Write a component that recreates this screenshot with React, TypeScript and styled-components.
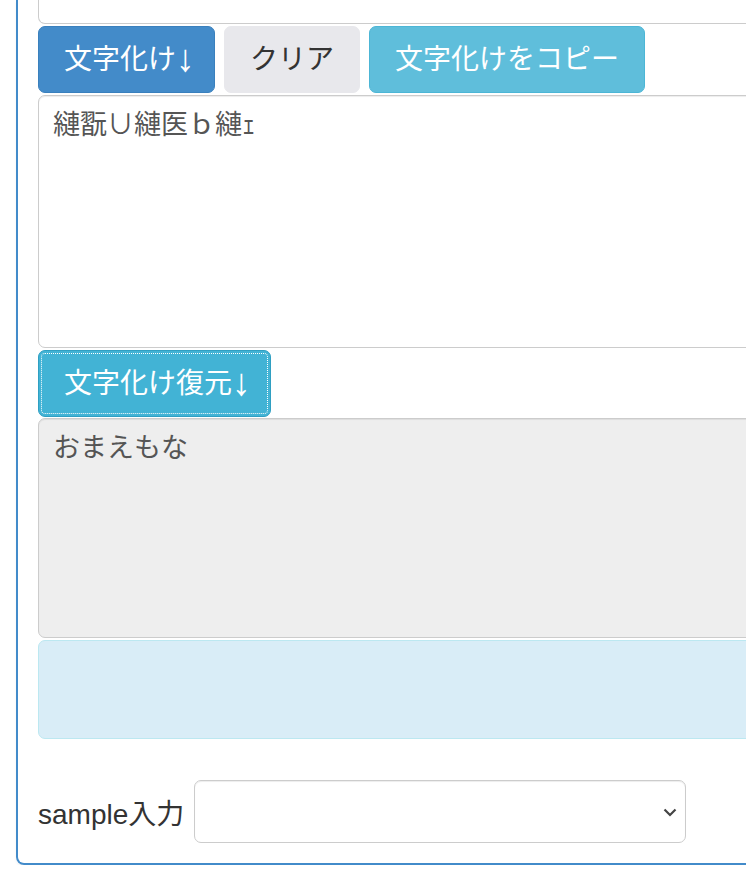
import React from "react";
import styled, { createGlobalStyle, css } from "styled-components";

const Global = createGlobalStyle`
  html, body {
    margin: 0;
    padding: 0;
    background: #fff;
    overflow: hidden;
  }
  body {
    font-family: "Liberation Sans", "Noto Sans CJK JP", sans-serif;
    color: #333;
  }
`;

const Page = styled.div`
  padding: 0 0 0 16px;
  width: 820px;
`;

const Panel = styled.div`
  border: 2px solid #428bca;
  border-top: none;
  border-radius: 0 0 8px 8px;
  padding: 0 20px 20px 20px;
  display: flex;
  flex-direction: column;
  box-shadow: 0 2px 3px rgba(0, 0, 0, 0.05);
`;

const Area = styled.textarea<{ $h: number; $readonly?: boolean; $cut?: boolean }>`
  display: block;
  box-sizing: border-box;
  width: 100%;
  height: ${(p) => p.$h}px;
  margin: 0;
  padding: 9px 14px;
  border: 1px solid #ccc;
  border-radius: 7px;
  background: ${(p) => (p.$readonly ? "#eee" : "#fff")};
  color: #555;
  font-family: "Liberation Sans", "Noto Sans CJK JP", sans-serif;
  font-size: 27px;
  line-height: 40px;
  resize: none;
  outline: none;
  box-shadow: inset 0 1px 1px rgba(0, 0, 0, 0.075);
  ${(p) =>
    p.$cut &&
    css`
      border-top: none;
      border-radius: 0 0 7px 7px;
      box-shadow: none;
    `}
`;

const ButtonRow = styled.div`
  display: flex;
  gap: 9px;
  margin: 2px 0;
`;

type Variant = "primary" | "default" | "info" | "infoActive";

const palette: Record<Variant, { bg: string; border: string; color: string }> = {
  primary: { bg: "#438bc9", border: "#3a80bd", color: "#fff" },
  default: { bg: "#e8e8ec", border: "#e8e8ec", color: "#333" },
  info: { bg: "#5fbedb", border: "#4cb6d6", color: "#fff" },
  infoActive: { bg: "#42b3d5", border: "#2f9fc2", color: "#fff" },
};

const Btn = styled.button<{ $v: Variant; $focus?: boolean }>`
  box-sizing: border-box;
  height: 67px;
  padding: 0 25px;
  border: 1px solid ${(p) => palette[p.$v].border};
  border-radius: 7px;
  background: ${(p) => palette[p.$v].bg};
  color: ${(p) => palette[p.$v].color};
  font-family: "Liberation Sans", "Noto Sans CJK JP", sans-serif;
  font-size: 28px;
  line-height: 36px;
  white-space: nowrap;
  cursor: pointer;
  ${(p) =>
    p.$focus &&
    css`
      outline: 1.5px dotted #fff;
      outline-offset: -4px;
    `}
`;

const Arrow = styled.span`
  font-family: "Liberation Sans", sans-serif;
  font-size: 1.35em;
  line-height: 1px;
  vertical-align: -2px;
  margin-right: -6px;
`;

const SingleRow = styled.div`
  display: flex;
  margin: 2px 0 1px;
`;

const Alert = styled.div`
  box-sizing: border-box;
  height: 99px;
  margin-top: 2px;
  background: #d9edf7;
  border: 1px solid #bce8f1;
  border-radius: 7px;
`;

const FormRow = styled.div`
  display: flex;
  align-items: center;
  gap: 10px;
  margin-top: 41px;
`;

const Label = styled.label`
  font-size: 28px;
  color: #333;
  white-space: nowrap;
`;

const SelectWrap = styled.div`
  position: relative;
  width: 492px;
  height: 63px;
`;

const Select = styled.select`
  box-sizing: border-box;
  width: 100%;
  height: 100%;
  appearance: none;
  -webkit-appearance: none;
  border: 1px solid #ccc;
  border-radius: 7px;
  background: #fff;
  padding: 0 14px;
  font-family: "Liberation Sans", "Noto Sans CJK JP", sans-serif;
  font-size: 27px;
  color: #555;
  box-shadow: inset 0 1px 1px rgba(0, 0, 0, 0.075);
`;

const Chevron = styled.svg`
  position: absolute;
  right: 9px;
  top: 27px;
  width: 14px;
  height: 10px;
  pointer-events: none;
`;

export default function App() {
  return (
    <>
      <Global />
      <Page>
        <Panel>
          <Area $h={24} $cut readOnly />
          <ButtonRow>
            <Btn $v="primary">
              文字化け<Arrow>↓</Arrow>
            </Btn>
            <Btn $v="default">クリア</Btn>
            <Btn $v="info">文字化けをコピー</Btn>
          </ButtonRow>
          <Area $h={253} defaultValue="縺翫∪縺医ｂ縺ｪ" />
          <SingleRow>
            <Btn $v="infoActive" $focus>
              文字化け復元<Arrow>↓</Arrow>
            </Btn>
          </SingleRow>
          <Area $h={220} $readonly readOnly defaultValue="おまえもな" />
          <Alert />
          <FormRow>
            <Label>sample入力</Label>
            <SelectWrap>
              <Select defaultValue="">
                <option value=""></option>
              </Select>
              <Chevron viewBox="0 0 14 10">
                <path d="M1.5 2.5 L7 8 L12.5 2.5" fill="none" stroke="#444" strokeWidth="2.2" />
              </Chevron>
            </SelectWrap>
          </FormRow>
        </Panel>
      </Page>
    </>
  );
}
